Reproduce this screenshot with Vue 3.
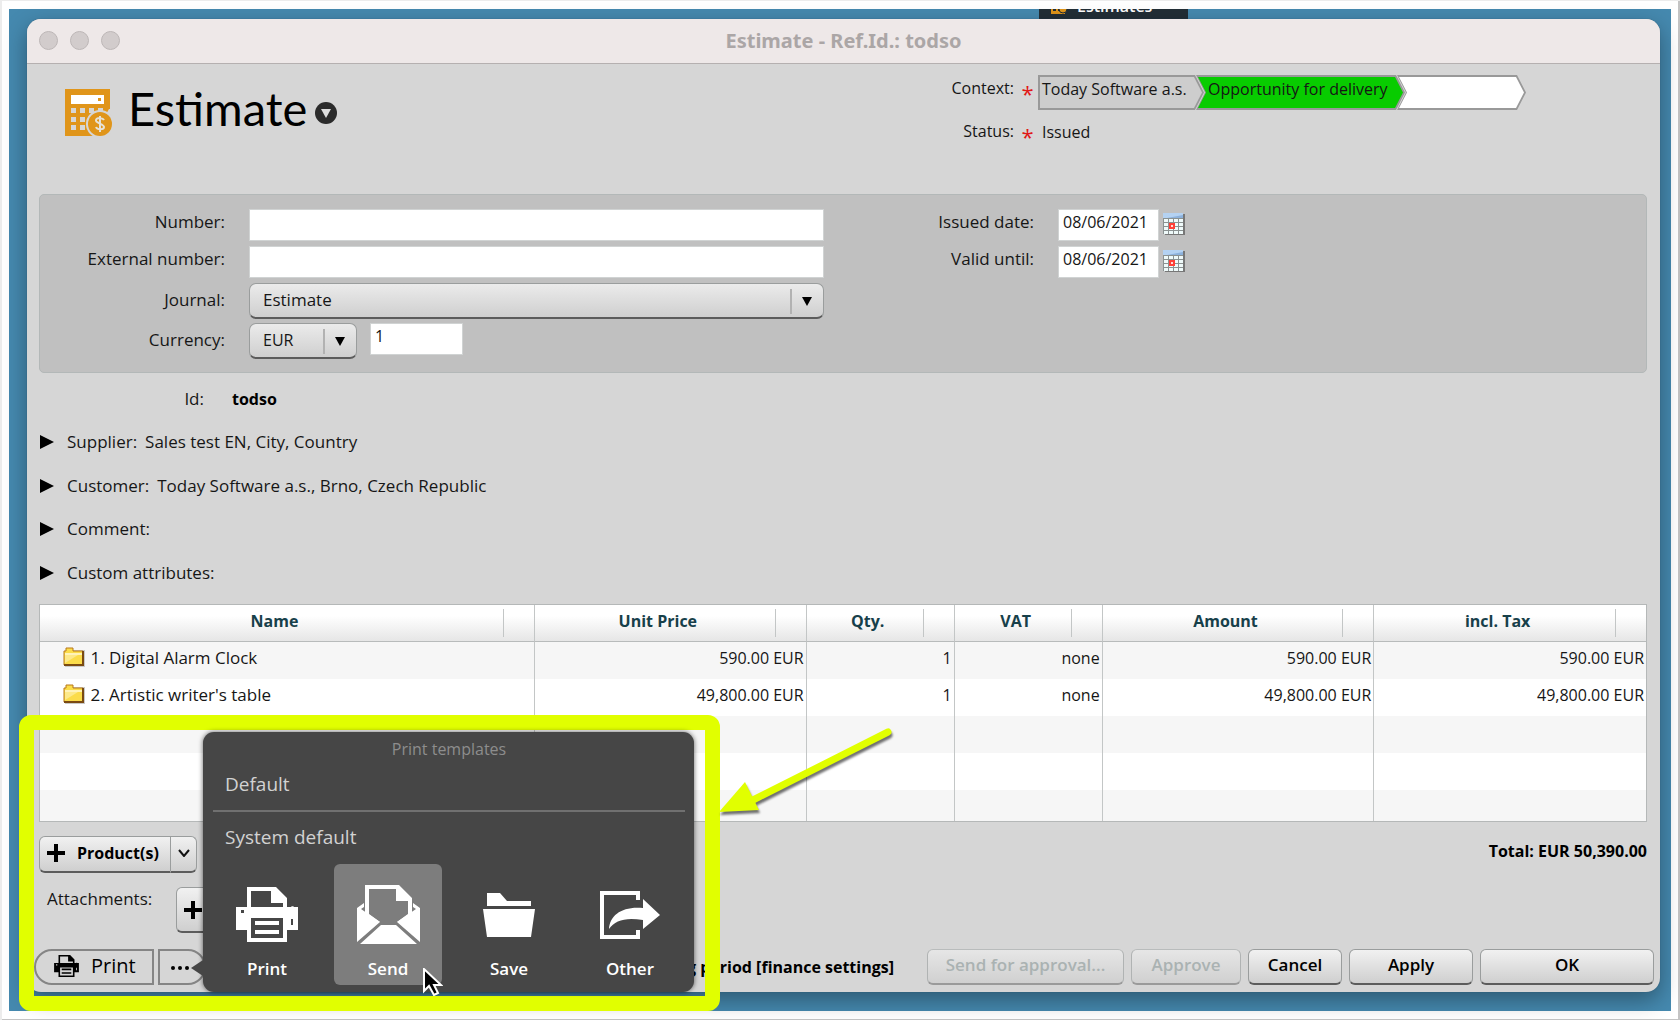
<script setup>
import { ref } from 'vue'

const number = ref('')
const externalNumber = ref('')
const journal = ref('Estimate')
const currency = ref('EUR')
const rate = ref('1')
const issuedDate = ref('08/06/2021')
const validUntil = ref('08/06/2021')

const sections = [
  { label: 'Supplier:', value: 'Sales test EN, City, Country' },
  { label: 'Customer:', value: 'Today Software a.s., Brno, Czech Republic' },
  { label: 'Comment:', value: '' },
  { label: 'Custom attributes:', value: '' },
]

const columns = ['Name', 'Unit Price', 'Qty.', 'VAT', 'Amount', 'incl. Tax']

const items = [
  { name: '1. Digital Alarm Clock', cells: ['590.00 EUR', '1', 'none', '590.00 EUR', '590.00 EUR'] },
  { name: "2. Artistic writer's table", cells: ['49,800.00 EUR', '1', 'none', '49,800.00 EUR', '49,800.00 EUR'] },
]

const calendarCells = Array.from({ length: 16 }, (_, i) => ({
  x: 1 + (i % 4) * 5,
  y: 7 + Math.floor(i / 4) * 4,
}))
</script>

<template>
  <div class="page">
    <div class="desktop">
      <div class="tab">
        <svg class="tab-icon" width="16" height="16" viewBox="0 0 16 16" aria-hidden="true">
          <path d="M0 0h14v16H0z" fill="#e0951a" />
          <path d="M2 6h3v2H2zM7 6h3v2H7zM2 10h3v3H2zM7 10h3v3H7z" fill="#222e36" />
          <circle cx="12" cy="11" r="4" fill="#e0951a" stroke="#222e36" />
        </svg>
        <span>Estimates</span>
      </div>

      <main class="window">
        <div class="titlebar">
          <span class="light"></span><span class="light"></span><span class="light"></span>
          <span class="window-title">Estimate - Ref.Id.: todso</span>
        </div>

        <div class="content">
          <header class="head">
            <svg class="head-icon" width="48" height="48" viewBox="0 0 48 48" aria-hidden="true">
              <path fill="#e0951a" d="M0 0h45v47H0z" />
              <path fill="#fff" d="M6 6h33v9H6z" />
              <path fill="#e0951a" d="M33 9h3v3h-3z" />
              <path fill="#d6d6d6" d="M6 19h5v5H6zM15 19h5v5h-5zM24 19h5v5h-5zM33 19h5v5h-5zM6 28h5v5H6zM15 28h5v5h-5zM24 28h5v5h-5zM6 36h5v5H6zM15 36h5v5h-5zM44 20h4v28H28z" />
              <circle cx="35" cy="35" r="14" fill="#d6d6d6" />
              <circle cx="35" cy="35" r="12" fill="#e0951a" />
              <path d="M39 31c-1-2-7-3-8 0s8 4 8 7-7 3-8 0M35 27v16" fill="none" stroke="#e6e2d8" stroke-width="2" />
            </svg>
            <h1>Estimate</h1>
            <button class="round" type="button" aria-label="Estimate actions">
              <svg width="22" height="22" viewBox="0 0 22 22">
                <circle cx="11" cy="11" r="11" fill="#2b2b2b" />
                <path d="M6 7h10l-5 9z" fill="#ddd" />
              </svg>
            </button>

            <div class="meta">
              <span class="meta-label">Context:</span>
              <span class="star">*</span>
              <nav class="steps">
                <a class="step first" href="#">Today Software a.s.</a>
                <a class="step active" href="#">Opportunity for delivery</a>
                <span class="step blank"></span>
              </nav>
              <span class="meta-label">Status:</span>
              <span class="star">*</span>
              <span class="status">Issued</span>
            </div>
          </header>

          <section class="panel">
            <div class="form">
              <label for="number">Number:</label>
              <input id="number" v-model="number" type="text" />
              <label for="external">External number:</label>
              <input id="external" v-model="externalNumber" type="text" />
              <label for="journal" class="for-select">Journal:</label>
              <div class="select">
                <select id="journal" v-model="journal"><option>Estimate</option></select>
                <svg width="10" height="9" viewBox="0 0 10 9"><path d="M0 0h10L5 9z" /></svg>
              </div>
              <label for="currency" class="for-select">Currency:</label>
              <div class="currency">
                <div class="select small">
                  <select id="currency" v-model="currency"><option>EUR</option></select>
                  <svg width="10" height="9" viewBox="0 0 10 9"><path d="M0 0h10L5 9z" /></svg>
                </div>
                <input v-model="rate" class="rate" type="text" aria-label="Exchange rate" />
              </div>
            </div>

            <div class="form dates">
              <label for="issued">Issued date:</label>
              <div class="date">
                <input id="issued" v-model="issuedDate" type="text" />
                <button class="calendar" type="button" aria-label="Pick issued date">
                  <svg width="22" height="24" viewBox="0 0 22 24">
                    <path d="M2 2h20v21H2z" fill="#777" />
                    <path d="M0 1h20v5H0z" fill="#b4d2f2" />
                    <path d="M4 6l16-3v3z" fill="#8db2dc" />
                    <path d="M0 6h20v16H0z" fill="#8b9292" />
                    <rect v-for="c in calendarCells" :key="c.x + '-' + c.y" :x="c.x" :y="c.y" width="4" height="3" fill="#effafa" />
                    <path d="M7 12h4v4H7z" fill="#ffd9d6" stroke="#ff4038" stroke-width="2" />
                  </svg>
                </button>
              </div>
              <label for="valid">Valid until:</label>
              <div class="date">
                <input id="valid" v-model="validUntil" type="text" />
                <button class="calendar" type="button" aria-label="Pick valid until date">
                  <svg width="22" height="24" viewBox="0 0 22 24">
                    <path d="M2 2h20v21H2z" fill="#777" />
                    <path d="M0 1h20v5H0z" fill="#b4d2f2" />
                    <path d="M4 6l16-3v3z" fill="#8db2dc" />
                    <path d="M0 6h20v16H0z" fill="#8b9292" />
                    <rect v-for="c in calendarCells" :key="c.x + '-' + c.y" :x="c.x" :y="c.y" width="4" height="3" fill="#effafa" />
                    <path d="M7 12h4v4H7z" fill="#ffd9d6" stroke="#ff4038" stroke-width="2" />
                  </svg>
                </button>
              </div>
            </div>
          </section>

          <div class="id-row"><span class="id-label">Id:</span><strong>todso</strong></div>

          <ul class="sections">
            <li v-for="s in sections" :key="s.label">
              <button type="button">
                <svg width="14" height="14" viewBox="0 0 14 14"><path d="M0 0l14 7-14 7z" /></svg>
                <span class="section-label">{{ s.label }}</span>
                <span>{{ s.value }}</span>
              </button>
            </li>
          </ul>

          <table>
            <colgroup>
              <col class="c-name" /><col class="c-money" /><col class="c-short" />
              <col class="c-short" /><col class="c-money" /><col class="c-money" />
            </colgroup>
            <thead>
              <tr><th v-for="c in columns" :key="c"><div>{{ c }}</div></th></tr>
            </thead>
            <tbody>
              <tr v-for="item in items" :key="item.name">
                <td class="name">
                  <svg width="22" height="20" viewBox="0 0 22 20" aria-hidden="true">
                    <path d="M3 3h19v17H2z" fill="#c9c9c9" />
                    <path d="M1 4h2V1h7v3h10v14H1z" fill="#fbdc4a" stroke="#b8781a" />
                    <path d="M2 6h17v2H2z" fill="#fff3b8" />
                    <path d="M2 8h13L2 16z" fill="#fde98a" />
                    <path d="M1 18h19V4" fill="none" stroke="#7a4a12" stroke-width="2" />
                  </svg>
                  {{ item.name }}
                </td>
                <td v-for="(cell, i) in item.cells" :key="i">{{ cell }}</td>
              </tr>
              <tr v-for="n in 3" :key="n"><td v-for="c in columns" :key="c"></td></tr>
            </tbody>
          </table>

          <div class="below">
            <div class="split">
              <button class="btn product" type="button">
                <svg width="18" height="18" viewBox="0 0 18 18"><path d="M7 0h4v7h7v4h-7v7H7v-7H0V7h7z" /></svg>
                Product(s)
              </button>
              <button class="btn more" type="button" aria-label="More products">
                <svg width="12" height="8" viewBox="0 0 12 8"><path d="M1 1l5 6 5-6" fill="none" stroke="#111" stroke-width="2" /></svg>
              </button>
            </div>
            <strong class="total">Total: EUR 50,390.00</strong>
          </div>

          <div class="attachments">
            <span class="attachments-label">Attachments:</span>
            <button class="btn add" type="button" aria-label="Add attachment">
              <svg width="18" height="18" viewBox="0 0 18 18"><path d="M7 0h4v7h7v4h-7v7H7v-7H0V7h7z" /></svg>
            </button>
          </div>
        </div>

        <footer class="bar">
          <button class="pill left" type="button">
            <svg width="25" height="22" viewBox="0 0 62 55"><path fill-rule="evenodd" d="M11 0h29l11 11v9h4c0-1 3-1 3 0h4v23H51v12H11V43H0V20h11zM15 4v16h32v-4H35V4zM5 23v3h3v-3zM55 32v6h2v-6zM15 31v20h32V31zM19 34h24v4H19zM19 43h24v4H19z" /></svg>
            Print
          </button>
          <div class="menu-anchor">
            <button class="pill right" type="button" aria-label="Print templates menu">
              <svg width="20" height="5" viewBox="0 0 20 5"><circle cx="3" cy="3" r="2" /><circle cx="10" cy="3" r="2" /><circle cx="17" cy="3" r="2" /></svg>
            </button>
            <div class="popup">
              <p class="popup-title">Print templates</p>
              <a class="template" href="#">Default</a>
              <hr />
              <a class="template system" href="#">System default</a>
              <div class="actions">
                <button class="action" type="button">
                  <span class="icon">
                    <svg width="62" height="55" viewBox="0 0 62 55"><path fill-rule="evenodd" d="M11 0h29l11 11v9h4c0-1 3-1 3 0h4v23H51v12H11V43H0V20h11zM15 4v16h32v-4H35V4zM5 23v3h3v-3zM55 32v6h2v-6zM15 31v20h32V31zM19 34h24v4H19zM19 43h24v4H19z" /></svg>
                  </span>
                  Print
                </button>
                <button class="action selected" type="button">
                  <span class="icon">
                    <svg width="63" height="59" viewBox="0 0 63 59">
                      <path fill-rule="evenodd" d="M8 0h34l13 13v18L42 37H22L8 31zM12 4v25l11 8h17l11-8V16H39V4z" />
                      <path d="M0 23l7-5v4l-3 2 19 13L0 57zM63 23l-7-5v4l3 2-19 13 23 20zM3 59l21-19h15l21 19z" />
                    </svg>
                  </span>
                  Send
                </button>
                <button class="action" type="button">
                  <span class="icon">
                    <svg width="52" height="44" viewBox="0 0 52 44"><path d="M4 0h13l7 8h24v5H4zM0 16h52l-4 28H4z" /></svg>
                  </span>
                  Save
                </button>
                <button class="action" type="button">
                  <span class="icon">
                    <svg width="60" height="48" viewBox="0 0 60 48"><path d="M0 0h40v9h-4V4H4v40h32v-5h4v9H0zM9 38C10 24 22 15 43 17V8l17 16-17 14v-9C26 26 15 29 9 38z" /></svg>
                  </span>
                  Other
                </button>
              </div>
              <svg class="cursor" width="20" height="28" viewBox="0 0 20 28" aria-hidden="true">
                <path d="M1 1v22l5-5 5 9 4-2-4-8h7z" fill="#000" stroke="#fff" stroke-width="2" />
              </svg>
            </div>
          </div>
          <strong class="note">g period [finance settings]</strong>
          <button class="btn w-send" type="button" disabled>Send for approval...</button>
          <button class="btn w-approve" type="button" disabled>Approve</button>
          <button class="btn w-cancel" type="button">Cancel</button>
          <button class="btn w-apply" type="button">Apply</button>
          <button class="btn w-ok" type="button">OK</button>
        </footer>

        <div class="highlight"></div>
        <svg class="arrow" width="180" height="96" viewBox="0 0 180 96" aria-hidden="true">
          <path d="M169 6L34 74" stroke="#e1ff00" stroke-width="7" stroke-linecap="round" />
          <path d="M0 86l26-30 14 28z" fill="#e1ff00" />
        </svg>
      </main>
    </div>
  </div>
</template>

<style>
body {
  background: #fff;
}
</style>

<style scoped>
* {
  box-sizing: border-box;
}
.page {
  min-height: 100vh;
  padding: 9px 9px 10px;
  background: #fff;
  box-shadow: inset 2px 1px #ececec, inset -2px -2px #c4c4c4;
  color: #161616;
  font: 16px/24px "Open Sans", "Noto Sans", sans-serif;
}
button,
input,
select {
  font: inherit;
  color: inherit;
}
button {
  padding: 0;
  border: 0;
  background: none;
}
strong {
  font-weight: 700;
}
.desktop {
  position: relative;
  padding: 10px 11px 19px 18px;
  background: #4589af;
}
.tab {
  position: absolute;
  top: 0;
  left: 1030px;
  display: flex;
  align-items: flex-end;
  gap: 10px;
  width: 149px;
  height: 10px;
  padding: 0 12px 5px;
  overflow: hidden;
  background: #222e36;
  color: #fff;
  font-size: 16px;
  line-height: 16px;
  font-weight: 600;
}
.tab-icon {
  flex: none;
}
.window {
  position: relative;
  border-radius: 14px;
  background: #d6d6d6;
  box-shadow: 0 0 1px #2a556e, 0 8px 22px rgba(0, 0, 0, 0.35);
}
.titlebar {
  display: flex;
  align-items: center;
  gap: 12px;
  height: 45px;
  padding: 0 12px 1px;
  border-radius: 14px 14px 0 0;
  border-bottom: 1px solid #b5b0b0;
  background: #eee8e8;
}
.light {
  width: 19px;
  height: 19px;
  border: 1px solid #bdb7b7;
  border-radius: 50%;
  background: #d2cccc;
}
.window-title {
  flex: 1;
  padding-right: 93px;
  color: #aba6a6;
  font: 700 20px/24px "Noto Sans", sans-serif;
  text-align: center;
}
.content {
  padding: 0 13px 0 12px;
}
.head {
  display: flex;
  align-items: flex-start;
  height: 130px;
  padding: 11px 121px 0 26px;
}
.head-icon {
  margin-top: 14px;
}
h1 {
  margin: 5px 0 0 15px;
  color: #000;
  font: 400 47px/56px Lato, sans-serif;
}
.round {
  display: flex;
  margin: 27px 0 0 8px;
}
.meta {
  display: grid;
  grid-template-columns: auto 24px auto;
  grid-template-rows: 35px 28px;
  row-gap: 8px;
  margin-left: auto;
}
.meta-label,
.status {
  padding-top: 1px;
  text-align: right;
}
.star {
  padding: 6px 0 0 3px;
  color: #e01818;
  font-size: 22px;
  text-align: center;
}
.status {
  padding: 2px 0 0 4px;
  text-align: left;
}
.steps {
  display: flex;
}
.step {
  position: relative;
  isolation: isolate;
  height: 35px;
  padding: 2px 0 0 4px;
  clip-path: polygon(0 0, calc(100% - 9px) 0, 100% 50%, calc(100% - 9px) 100%, 0 100%, 9px 50%);
  background: #999;
  color: #161616;
  text-decoration: none;
  white-space: nowrap;
}
.step::before {
  content: "";
  position: absolute;
  z-index: -1;
  inset: 2px;
  clip-path: polygon(0 0, calc(100% - 8px) 0, 100% 50%, calc(100% - 8px) 100%, 0 100%, 8px 50%);
  background: #fff;
}
.first {
  width: 166px;
  clip-path: polygon(0 0, calc(100% - 9px) 0, 100% 50%, calc(100% - 9px) 100%, 0 100%);
}
.first::before {
  clip-path: polygon(0 0, calc(100% - 8px) 0, 100% 50%, calc(100% - 8px) 100%, 0 100%);
  background: #cdcdcd;
}
.active {
  width: 209px;
  margin-left: -8px;
  padding-left: 12px;
}
.active::before {
  background: #08cc00;
}
.blank {
  width: 129px;
  margin-left: -8px;
}
.panel {
  display: grid;
  grid-template-columns: 785fr 823fr;
  padding: 14px 0 13px;
  border: 1px solid #b3b8b8;
  border-radius: 5px;
  background: #c0c0c0;
}
.form {
  display: grid;
  grid-template-columns: 185px 1fr;
  grid-template-rows: 31px 31px 34px 36px;
  gap: 6px 24px;
  text-align: right;
}
.form input {
  width: 100%;
  height: 32px;
  padding: 0 4px 6px;
  border: 1px solid #d0d3d3;
  border-radius: 0;
  background: #fff;
}
.form label {
  padding-top: 1px;
  font-size: 17px;
}
.form .for-select {
  padding-top: 5px;
}
.dates {
  grid-template-columns: 210px 1fr;
}
.date {
  display: flex;
  gap: 4px;
  align-items: flex-start;
}
.form .date input {
  width: 101px;
}
.calendar {
  display: flex;
  margin-top: 3px;
}
.select {
  position: relative;
  height: 36px;
}
.select select {
  width: 100%;
  height: 36px;
  padding: 0 13px 2px;
  appearance: none;
  border: 1px solid #9a9d9d;
  border-bottom: 2px solid #5c5c5c;
  border-radius: 7px;
  background: linear-gradient(#ebebeb, #cfcfcf);
}
#journal {
  font-size: 17px;
}
.select::after {
  content: "";
  position: absolute;
  top: 6px;
  right: 32px;
  width: 2px;
  height: 25px;
  background: #b2b2b2;
}
.select svg {
  position: absolute;
  top: 14px;
  right: 12px;
  pointer-events: none;
}
.currency {
  display: flex;
  gap: 13px;
}
.small {
  width: 108px;
}
.form .rate {
  width: 93px;
}
.id-row {
  display: flex;
  gap: 28px;
  height: 46px;
  padding-top: 14px;
}
.id-row strong {
  color: #000;
}
.id-label {
  width: 165px;
  font-size: 17px;
  text-align: right;
}
.sections {
  margin: 0 0 10px;
  padding: 1px 0 0 1px;
  list-style: none;
}
.sections button {
  display: flex;
  align-items: center;
  height: 44px;
  font-size: 17px;
}
.sections li:nth-child(even) button {
  height: 43px;
}
.sections svg {
  margin-right: 13px;
}
.section-label {
  margin-right: 8px;
}
table {
  width: 100%;
  table-layout: fixed;
  border-collapse: separate;
  border-spacing: 0;
  border: 1px solid #b5b8b8;
  background: #fff;
}
.c-name {
  width: 495px;
}
.c-short {
  width: 148px;
}
th {
  height: 37px;
  padding: 0;
  border-right: 1px solid #c3c6c6;
  border-bottom: 1px solid #b8bbbb;
  background: linear-gradient(#fff 30%, #e6e6e6);
  color: #17404a;
  font-weight: 700;
}
th div {
  height: 28px;
  margin-right: 30px;
  padding: 0 0 4px 6px;
  border-right: 1px solid #c3c6c6;
}
td {
  height: 37px;
  padding: 0 2px 5px;
  border-right: 1px solid #c3c6c6;
  text-align: right;
}
th:last-child,
td:last-child {
  border-right: 0;
}
tbody tr:nth-child(odd) td {
  background: #f6f6f6;
}
tbody tr:last-child td {
  height: 31px;
}
.name {
  padding-left: 23px;
  font-size: 17px;
  text-align: left;
}
.name svg {
  margin-right: 1px;
  vertical-align: -3px;
}
.btn {
  display: flex;
  align-items: center;
  justify-content: center;
  height: 37px;
  padding-bottom: 3px;
  border: 1px solid #9a9d9d;
  border-bottom: 2px solid #5c5c5c;
  border-radius: 6px;
  background: linear-gradient(#f1f1f1, #cfcfcf);
  color: #000;
  font-size: 17px;
  font-weight: 600;
}
.btn:disabled {
  border-color: #b9bcbc #b0b3b3 #9a9a9a;
  background: linear-gradient(#e6e6e6, #d0d0d0);
  color: #aab2b2;
}
.below {
  display: flex;
  justify-content: space-between;
  padding-top: 14px;
}
.split {
  display: flex;
}
.product {
  justify-content: flex-start;
  gap: 12px;
  width: 132px;
  padding-left: 7px;
  border-radius: 6px 0 0 6px;
  font-size: 16px;
  font-weight: 700;
}
.more {
  width: 26px;
  border-left: 0;
  border-radius: 0 6px 6px 0;
}
.total {
  padding-top: 3px;
  color: #000;
}
.attachments {
  display: flex;
  padding: 14px 0 16px 8px;
}
.attachments-label {
  width: 129px;
  font-size: 17px;
}
.add {
  width: 60px;
  height: 46px;
  padding: 0 27px 0 0;
}
.bar {
  display: flex;
  align-items: center;
  gap: 7px;
  padding: 0 6px 7px 7px;
}
.bar .btn {
  height: 36px;
}
.pill {
  display: flex;
  align-items: center;
  height: 36px;
  border: 2px solid #858585;
  color: #000;
}
.left {
  gap: 12px;
  width: 120px;
  padding: 0 0 2px 18px;
  border-radius: 18px 0 0 18px;
  font-size: 20px;
  font-weight: 500;
}
.right {
  width: 48px;
  padding-left: 10px;
  border-radius: 0 18px 18px 0;
}
.menu-anchor {
  position: relative;
  margin-left: -3px;
}
.popup {
  position: absolute;
  z-index: 2;
  bottom: -7px;
  left: 45px;
  width: 491px;
  height: 260px;
  padding: 5px 9px 6px 10px;
  border-radius: 11px;
  background: #464646;
  box-shadow: 0 0 5px rgba(0, 0, 0, 0.6);
}
.popup::before {
  content: "";
  position: absolute;
  bottom: 16px;
  left: -12px;
  border: 8px solid transparent;
  border-width: 8px 12px 8px 0;
  border-right-color: #464646;
}
.popup-title {
  margin: 0;
  color: #8d8d8d;
  text-align: center;
}
.template {
  display: block;
  padding: 11px 12px 14px;
  color: #d2d2d2;
  font-size: 19px;
  text-decoration: none;
}
.system {
  padding: 13px 12px 15px;
}
hr {
  height: 2px;
  margin: 0;
  border: 0;
  background: #707070;
}
.actions {
  display: flex;
  gap: 13px;
}
.action {
  width: 108px;
  height: 121px;
  padding-top: 12px;
  border-radius: 6px;
  color: #fff;
  font-size: 17px;
  font-weight: 600;
}
.action .icon {
  display: flex;
  align-items: center;
  justify-content: center;
  height: 68px;
  margin-bottom: 8px;
}
.action svg {
  fill: #fff;
}
.selected {
  background: #7d7d7d;
}
.cursor {
  position: absolute;
  bottom: -4px;
  left: 220px;
}
.note {
  flex: 1;
  padding-right: 26px;
  color: #000;
  text-align: right;
}
.w-send {
  width: 197px;
}
.w-approve {
  width: 110px;
}
.w-cancel {
  width: 94px;
}
.w-apply {
  width: 124px;
}
.w-ok {
  width: 174px;
}
.highlight {
  position: absolute;
  bottom: -19px;
  left: -8px;
  width: 701px;
  height: 296px;
  border: 15px solid #e1ff00;
  border-radius: 12px;
  pointer-events: none;
}
.arrow {
  position: absolute;
  bottom: 170px;
  left: 692px;
  fill: none;
  filter: drop-shadow(1px 3px 1px rgba(0, 0, 0, 0.55));
  pointer-events: none;
}
</style>
